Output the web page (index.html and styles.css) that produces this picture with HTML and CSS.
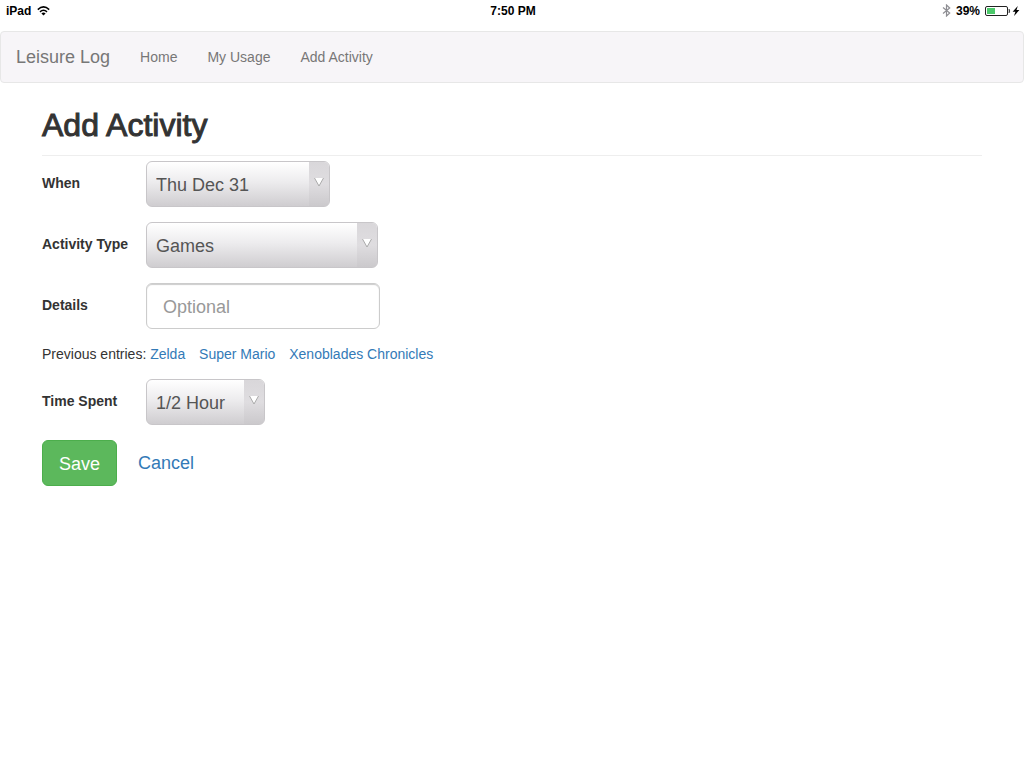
FILE: index.html
```html
<!DOCTYPE html>
<html lang="en">
<head>
  <meta charset="UTF-8">
  <title>Leisure Log</title>
  <meta name="viewport" content="width=device-width, initial-scale=1.0">
  <link rel="stylesheet" href="styles.css">
</head>
<body>

  <!-- Status bar -->
  <div class="status-bar">
    <div class="status-left">
      <span>iPad</span>
      <svg width="13" height="10" viewBox="0 0 13 10" fill="none" stroke="#000" stroke-width="1.5">
        <path d="M0.8 3.6 Q6.5 -1.8 12.2 3.6"/>
        <path d="M3 5.9 Q6.5 2.6 10 5.9"/>
        <path d="M4.4 7.4 Q6.5 5.8 8.6 7.4 L6.5 9.6 Z" fill="#000" stroke="none"/>
      </svg>
    </div>
    <div class="status-time">7:50 PM</div>
    <div class="status-right">
      <svg width="9" height="13" viewBox="0 0 9 13" fill="none" stroke="#8e8e93" stroke-width="1.2">
        <path d="M1 3.5 L7.7 9 L4.5 12 V1 L7.7 4 L1 9.5"/>
      </svg>
      <span class="percent">39%</span>
      <svg width="35" height="12" viewBox="0 0 35 12">
        <rect x="0.5" y="1.5" width="22" height="9" rx="1.5" fill="#fff" stroke="#222"/>
        <rect x="2" y="3" width="8" height="6" fill="#4cc96b"/>
        <path d="M24 4 Q25.5 6 24 8 Z" fill="#222" stroke="#222" stroke-width="0.5"/>
        <path d="M32.8 1 L27.6 6.8 H30.4 L29 11 L34.4 5.1 H31.5 Z" fill="#000"/>
      </svg>
    </div>
  </div>

  <!-- Navigation -->
  <nav class="navbar">
    <a class="brand" href="#">Leisure Log</a>
    <a class="nav-link" href="#">Home</a>
    <a class="nav-link" href="#">My Usage</a>
    <a class="nav-link" href="#">Add Activity</a>
  </nav>

  <main class="container">
    <h1 class="page-title">Add Activity</h1>

    <form class="activity-form">
      <div class="form-row">
        <label for="when">When</label>
        <div class="select-box select-when">
          <select id="when">
            <option>Thu Dec 31</option>
            <option>Wed Dec 30</option>
          </select>
          <span class="arrow">
            <svg width="10" height="10" viewBox="0 0 10 10"><path d="M0.5 1 H9.5 L5 9 Z" fill="#fff"/><path d="M0.5 1 L5 9 L9.5 1" fill="none" stroke="#aaa"/></svg>
          </span>
        </div>
      </div>

      <div class="form-row">
        <label for="type">Activity Type</label>
        <div class="select-box select-type">
          <select id="type">
            <option>Games</option>
          </select>
          <span class="arrow">
            <svg width="10" height="10" viewBox="0 0 10 10"><path d="M0.5 1 H9.5 L5 9 Z" fill="#fff"/><path d="M0.5 1 L5 9 L9.5 1" fill="none" stroke="#aaa"/></svg>
          </span>
        </div>
      </div>

      <div class="form-row">
        <label for="details">Details</label>
        <input class="text-input" type="text" id="details" placeholder="Optional">
      </div>

      <div class="previous">
        Previous entries:
        <a href="#">Zelda</a>
        <a href="#">Super Mario</a>
        <a href="#">Xenoblades Chronicles</a>
      </div>

      <div class="form-row">
        <label for="time">Time Spent</label>
        <div class="select-box select-time">
          <select id="time">
            <option>1/2 Hour</option>
            <option>1 Hour</option>
          </select>
          <span class="arrow">
            <svg width="10" height="10" viewBox="0 0 10 10"><path d="M0.5 1 H9.5 L5 9 Z" fill="#fff"/><path d="M0.5 1 L5 9 L9.5 1" fill="none" stroke="#aaa"/></svg>
          </span>
        </div>
      </div>

      <div class="buttons">
        <button class="btn-save" type="submit">Save</button>
        <a class="btn-cancel" href="#">Cancel</a>
      </div>
    </form>
  </main>

</body>
</html>
```

FILE: styles.css
```css
* {
  box-sizing: border-box;
}

body {
  margin: 0;
  background: #fff;
  color: #333;
  font-family: "Helvetica Neue", "Liberation Sans", Arial, sans-serif;
  font-size: 14px;
  line-height: 20px;
}

a {
  color: #337ab7;
  text-decoration: none;
}

/* Status bar */
.status-bar {
  display: grid;
  grid-template-columns: 1fr auto 1fr;
  align-items: center;
  height: 21px;
  padding: 0 4px;
  padding-left: 6px;
  margin-bottom: 10px;
  color: #000;
  font-size: 12px;
  font-weight: bold;
}

.status-left,
.status-right {
  display: flex;
  align-items: center;
  gap: 6px;
}

.status-right {
  justify-content: flex-end;
  gap: 5px;
}

/* Navbar */
.navbar {
  display: flex;
  align-items: center;
  height: 52px;
  background: #f7f5f8;
  border: 1px solid #e7e7e7;
  border-radius: 4px;
}

.navbar a {
  padding: 0 15px;
  color: #777;
}

.navbar .brand {
  font-size: 18px;
}

/* Page */
.container {
  padding: 22px 42px;
}

.page-title {
  margin: 0 0 5px;
  padding-bottom: 10px;
  border-bottom: 1px solid #eee;
  font-size: 32px;
  font-weight: normal;
  line-height: 40px;
  -webkit-text-stroke: 1px #333;
}

.activity-form {
  display: flex;
  flex-direction: column;
  gap: 15px;
}

.form-row {
  display: flex;
  align-items: center;
}

label {
  width: 104px;
  padding-bottom: 2px;
  font-weight: bold;
}

.select-box {
  position: relative;
  height: 46px;
}

.select-when {
  width: 184px;
}

.select-type {
  width: 232px;
}

.select-time {
  width: 119px;
}

select {
  appearance: none;
  width: 100%;
  height: 46px;
  padding: 1px 22px 0 9px;
  border: 1px solid #c8c6c9;
  border-radius: 6px;
  background: linear-gradient(#fff, #edecee 45%, #cfcdd0);
  color: #555;
  font-family: inherit;
  font-size: 18px;
}

.arrow {
  position: absolute;
  top: 1px;
  right: 1px;
  bottom: 1px;
  display: flex;
  align-items: center;
  justify-content: center;
  width: 20px;
  padding-bottom: 4px;
  border-radius: 0 5px 5px 0;
  background: linear-gradient(#d9d7da, #dfdde0 50%, #cbc9cc);
  pointer-events: none;
}

.text-input {
  width: 234px;
  height: 46px;
  padding: 2px 16px 0;
  border: 1px solid #ccc;
  border-radius: 6px;
  background: #fff;
  box-shadow: inset 0 1px 1px #ccc;
  color: #555;
  font-family: inherit;
  font-size: 18px;
}

.text-input::placeholder {
  color: #999;
}

.previous a {
  margin-right: 10px;
}

.buttons {
  display: flex;
  align-items: center;
  gap: 5px;
}

.btn-save,
.btn-cancel {
  height: 46px;
  padding: 0 16px;
  border-radius: 6px;
  font-family: inherit;
  font-size: 18px;
  line-height: 46px;
}

.btn-save {
  border: 1px solid #4cae4c;
  background: #5cb85c;
  color: #fff;
}
```
